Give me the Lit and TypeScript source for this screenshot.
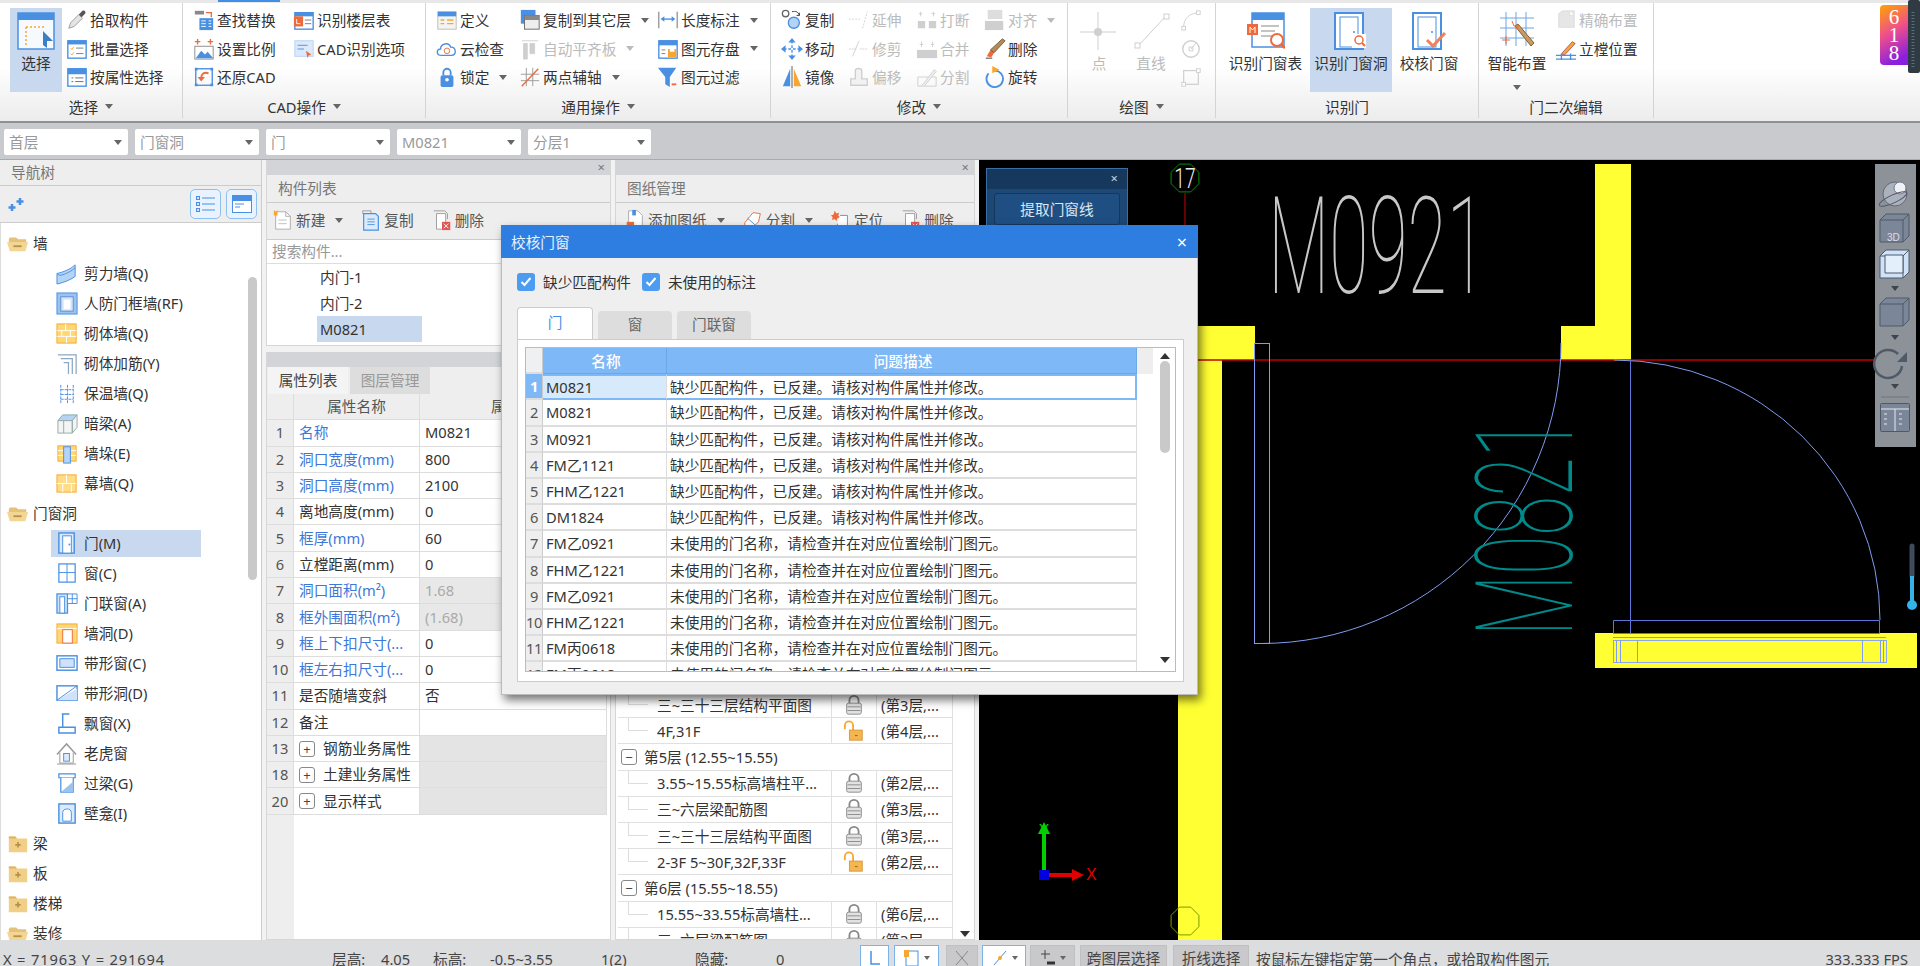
import { LitElement, html, css, svg } from "lit";
import { customElement } from "lit/decorators.js";

const B = "#4a90e2", LB = "#b5d3f5", O = "#f7a72f", R = "#ee6a3a", G = "#cfcfcf", D = "#666";
const I: Record<string, any> = {
  pick: svg`<path d="M3 21l2-6 9-9 4 4-9 9z" fill="#e4e4e4" stroke="#999"/><path d="M14 6l4-4c2-1 4 1 3 3l-4 4z" fill="#555"/>`,
  batch: svg`<rect x="2" y="3" width="20" height="19" fill="#fff" stroke="${B}" stroke-width="1.5"/><rect x="2" y="3" width="20" height="4" fill="${B}"/><path d="M5 11l1.500 1.500 2-3M5 17l1.500 1.500 2-3" stroke="${O}" fill="none"/><path d="M11 11h8M11 17h8" stroke="#777"/>`,
  attr: svg`<rect x="2" y="3" width="20" height="19" fill="#fff" stroke="${B}" stroke-width="1.500"/><rect x="2" y="3" width="20" height="6" fill="${B}"/><path d="M6 13h2M6 17h2M10 13h9M10 17h9" stroke="#666"/>`,
  find: svg`<rect x="2" y="2" width="10" height="4" fill="#888"/><path d="M14 4h6v5" stroke="${R}" fill="none" stroke-width="1.500"/><rect x="7" y="10" width="15" height="13" fill="${B}"/><path d="M9 13h5M9 16h5M9 19h5M17 13h3M17 16h3M17 19h3" stroke="#fff"/>`,
  floor: svg`<rect x="2" y="4" width="20" height="18" fill="#fff" stroke="${B}" stroke-width="1.500"/><rect x="2" y="4" width="20" height="4" fill="${B}"/><rect x="1" y="8" width="10" height="11" fill="${R}"/><path d="M4 11v5h4" stroke="#fff" fill="none"/><path d="M13 12h7M13 16h7" stroke="#777"/>`,
  scale: svg`<path d="M5 1v6M2 4h6M19 1v6M16 4h6" stroke="${R}" stroke-width="1.500"/><rect x="2" y="9" width="20" height="14" fill="#fff" stroke="#888"/><path d="M3 22l6-8 4 4 3-3 6 7z" fill="${B}"/>`,
  cadopt: svg`<rect x="2" y="3" width="20" height="17" fill="#dbe9fa" stroke="${LB}"/><path d="M14 14l6 4-3 1-1 3z" fill="${R}"/><path d="M5 8h11M5 12h7" stroke="${B}"/>`,
  restore: svg`<rect x="3" y="3" width="18" height="18" fill="none" stroke="${B}" stroke-width="1.500"/><path d="M2 2h3v3H2zM19 2h3v3h-3zM2 19h3v3H2zM19 19h3v3h-3z" fill="${B}"/><path d="M17 8c-5-2-8 1-8 5" stroke="${R}" fill="none" stroke-width="2"/><path d="M5 12h8l-4 5z" fill="${R}"/>`,
  def: svg`<rect x="2" y="3" width="20" height="19" fill="#f4f4f4" stroke="#bbb"/><rect x="2" y="3" width="20" height="5" fill="${B}"/><path d="M5 12h4M5 16h4M12 12h7M12 16h7" stroke="${O}" stroke-width="1.500"/>`,
  cloud: svg`<path d="M6 19c-6 0-6-7-1-7 0-6 9-8 11-2 6-1 7 9 1 9z" fill="#fff" stroke="${B}" stroke-width="1.500"/><circle cx="12" cy="14" r="3" fill="none" stroke="${R}"/>`,
  copyf: svg`<rect x="2" y="1" width="16" height="15" fill="${B}"/><rect x="6" y="7" width="16" height="15" fill="#eee" stroke="#666"/><rect x="6" y="7" width="16" height="5" fill="#888"/>`,
  align: svg`<path d="M3 3h18M5 6v17h4V6zM12 6v11h5V6z" fill="${G}" stroke="${G}"/>`,
  lock: svg`<rect x="5" y="10" width="14" height="13" rx="2" fill="${B}"/><path d="M8 10V7a4 4 0 018 0v3" stroke="${B}" stroke-width="2" fill="none"/><circle cx="12" cy="15" r="2" fill="#fff"/>`,
  two: svg`<path d="M8 2v20M15 2v20M2 9h20M2 16h20" stroke="#999"/><path d="M3 22L21 3" stroke="${R}" stroke-width="1.500"/>`,
  len: svg`<path d="M2 3v18M22 3v18" stroke="#666"/><path d="M5 11h13" stroke="${B}" stroke-width="1.500"/><path d="M4 11l4-3v6zM20 11l-4-3v6z" fill="${B}"/>`,
  save: svg`<rect x="2" y="3" width="20" height="19" fill="#fff" stroke="${B}" stroke-width="1.500"/><rect x="2" y="3" width="20" height="5" fill="${B}"/><rect x="12" y="12" width="9" height="9" fill="${O}"/><rect x="14" y="12" width="5" height="3" fill="#fff"/><path d="M5 13h4M5 17h4" stroke="#777"/>`,
  filter: svg`<path d="M1 2h20l-7 10v11l-5-3v-8z" fill="${B}"/><path d="M16 20h5" stroke="${R}" stroke-width="2"/>`,
  copy: svg`<circle cx="5" cy="5" r="3.500" fill="none" stroke="#666" stroke-width="1.500"/><circle cx="14" cy="15" r="6" fill="${LB}" stroke="${B}" stroke-width="1.500"/><path d="M12 3c4-1 7 0 8 4M20 4v3h-3" fill="none" stroke="#333"/>`,
  extend: svg`<path d="M1 11h12M16 21L21 3" stroke="${G}" stroke-dasharray="2 1.500"/>`,
  brk: svg`<path d="M2 13h8v8H2zM14 13h8v8h-8z" fill="${G}"/><path d="M5 8V3M19 8V3M3 5h4M17 5h4" stroke="${G}"/>`,
  al2: svg`<rect x="4" y="1" width="16" height="10" fill="#ddd"/><rect x="1" y="13" width="20" height="10" fill="${G}"/>`,
  move: svg`<path d="M12 3v18M3 12h18" stroke="${B}" stroke-width="1.500" stroke-dasharray="3 2"/><path d="M12 0l4 5H8zM12 24l4-5H8zM0 12l5-4v8zM24 12l-5-4v8z" fill="${B}"/>`,
  trim: svg`<path d="M1 12h8M13 12h9" stroke="${G}" stroke-dasharray="2 1"/><path d="M5 20L12 3" stroke="${G}"/>`,
  merge: svg`<rect x="1" y="13" width="22" height="9" fill="${G}"/><path d="M6 4v6M18 4v6M4 7h4M16 7h4" stroke="${G}"/>`,
  del: svg`<path d="M2 22h7" stroke="#333"/><path d="M3 20l4-7 4 3-3 5z" fill="${R}"/><path d="M7 13L20 1l3 2-12 13z" fill="#b58a5a" stroke="#7a5a33"/>`,
  mirror: svg`<path d="M10 3L2 22h8z" fill="${B}"/><path d="M14 3l8 19h-8z" fill="${O}"/><path d="M12 0v24" stroke="#555"/>`,
  offset: svg`<path d="M3 21v-7h5V5c0-3 7-3 7 0v9h6v7z" fill="#f2f2f2" stroke="${G}" stroke-width="1.500"/>`,
  split: svg`<path d="M2 22V12h20v10z" fill="none" stroke="${G}"/><path d="M6 22L20 4l2 2L9 22" fill="#eee" stroke="${G}"/>`,
  rot: svg`<path d="M12 5a9 9 0 11-7 3" fill="none" stroke="${B}" stroke-width="2"/><path d="M9 0l8 4-8 4z" fill="${O}"/>`,
  point: svg`<path d="M18 0v40M0 20h36" stroke="${G}"/><circle cx="18" cy="20" r="4" fill="${G}"/>`,
  line: svg`<path d="M6 34L34 4" stroke="${G}"/><rect x="3" y="31" width="5" height="5" fill="#fff" stroke="${G}"/><rect x="32" y="2" width="5" height="5" fill="#fff" stroke="${G}"/>`,
  arc: svg`<path d="M4 20C4 10 10 5 20 4" fill="none" stroke="${G}"/><rect x="2" y="19" width="4" height="4" fill="#fff" stroke="${G}"/><rect x="18" y="2" width="4" height="4" fill="#fff" stroke="${G}"/>`,
  circ: svg`<circle cx="12" cy="12" r="9" fill="none" stroke="${G}" stroke-width="1.500"/><rect x="10" y="10" width="4" height="4" fill="#fff" stroke="${G}"/><path d="M12 12l6-7" stroke="${G}"/>`,
  rct: svg`<rect x="4" y="5" width="16" height="15" fill="none" stroke="${G}" stroke-width="1.300"/><rect x="2" y="18" width="4" height="4" fill="#fff" stroke="${G}"/><rect x="18" y="3" width="4" height="4" fill="#fff" stroke="${G}"/>`,
  sel: svg`<rect x="1" y="1" width="36" height="36" fill="#f6fafe" stroke="${B}" stroke-width="1.500"/><rect x="1" y="1" width="36" height="7" fill="${B}"/><path d="M9 15h20M9 15v19" stroke="${O}" stroke-dasharray="2 2" stroke-width="1.500" fill="none"/><path d="M26 19l10 10-6 0 0 7-4-3z" fill="#3a7fc8"/>`,
  tbl: svg`<rect x="5" y="1" width="32" height="34" fill="#fff" stroke="${B}" stroke-width="1.500"/><rect x="5" y="1" width="32" height="7" fill="${B}"/><rect x="0" y="12" width="11" height="11" fill="${R}"/><path d="M3 21v-6l2.500 3 2.500-3v6" stroke="#fff" fill="none"/><path d="M14 14h18M14 19h14M14 24h12" stroke="#888"/><circle cx="30" cy="28" r="6" fill="#fff" stroke="${R}" stroke-width="2"/><path d="M34 32l4 4" stroke="${R}" stroke-width="3"/>`,
  rec: svg`<rect x="3" y="1" width="28" height="36" fill="#fff" stroke="${B}" stroke-width="2"/><rect x="8" y="5" width="18" height="30" fill="none" stroke="${B}"/><circle cx="22" cy="20" r="1" fill="${B}"/><rect x="20" y="22" width="14" height="14" fill="#fff"/><circle cx="27" cy="28" r="4" fill="none" stroke="${R}" stroke-width="1.500"/><path d="M30 31l3 3" stroke="${R}" stroke-width="2"/>`,
  chk: svg`<rect x="3" y="1" width="28" height="36" fill="#fff" stroke="${B}" stroke-width="2"/><rect x="8" y="5" width="18" height="30" fill="none" stroke="${B}"/><circle cx="22" cy="20" r="1" fill="${B}"/><path d="M17 28l6 6 12-13" stroke="#f2815a" stroke-width="3" fill="none"/>`,
  smart: svg`<path d="M2 6h34M2 16h34M2 26h34M8 0v34M18 0v34M28 0v34" stroke="#6aa5e8"/><path d="M17 14l16 20 3-3-16-19z" fill="#c99b63" stroke="#806030"/><path d="M14 9l2 5 5-1-3 4" stroke="${R}" fill="none"/><path d="M8 24v8M4 28h8" stroke="${R}"/>`,
  prec: svg`<path d="M4 5l4-3h13v18H4z" fill="#e6e6e6" stroke="#ddd"/><path d="M16 2v5h5" fill="#fff" stroke="#ddd"/>`,
  mull: svg`<path d="M8 16l11-12 3 2-11 12-4 1z" fill="${O}" stroke="#a56"/><path d="M1 19h22M1 23h22M7 17v7M17 17v7" stroke="${B}" stroke-width="1.500"/>`,
  open: svg`<path d="M2 8l1-2h7l2 2h9v4H2z" fill="#e4c27a"/><path d="M0 11h23l-3 10H3z" fill="#f3d693"/><path d="M7 15.500h9" stroke="#b69248" stroke-width="2"/>`,
  closed: svg`<path d="M2 5h7l2 2h11v15H2z" fill="#f1cf88"/><path d="M2 5h7l2 2H2z" fill="#dcb368"/><path d="M12 11v6M9 14h6" stroke="#b69248" stroke-width="1.800"/>`,
  shear: svg`<path d="M1 12c5-1 14-4 19-9v12c-5 4-14 7-19 8z" fill="${LB}" stroke="${B}"/><path d="M1 12l3 2c6-1 13-5 16-8" fill="none" stroke="${B}"/>`,
  rf: svg`<rect x="1" y="1" width="21" height="22" fill="#9cc2ef" stroke="${B}"/><rect x="5" y="5" width="13" height="15" fill="#d5e5f8" stroke="#5b8fd0"/><rect x="8" y="8" width="7" height="10" fill="#fff"/>`,
  brick: svg`<rect x="1" y="2" width="20" height="20" fill="#ffd874" stroke="${O}"/><path d="M1 9h20M1 15h20M10 2v7M6 9v6M15 9v6M11 15v7" stroke="#fff"/>`,
  bars: svg`<path d="M2 3h19v20M5 7h12v16M8 11h5v12" stroke="#8ea7c5" fill="none" stroke-width="1.300"/>`,
  ins: svg`<path d="M5 3v20M12 3v20M18 3v20M5 8h13M5 13h13M5 18h13" stroke="${B}" stroke-dasharray="3 1"/>`,
  beam: svg`<path d="M2 9l5-6h15l-5 6z" fill="${LB}" stroke="#8aa"/><path d="M2 9h15v13H2zM17 9l5-6v13l-5 6zM8 9v13" fill="#f4f4f4" stroke="#9aa"/>`,
  pier: svg`<rect x="2" y="4" width="19" height="16" fill="#ffd874" stroke="${O}"/><path d="M2 9h19M2 14h19" stroke="#fff"/><rect x="8" y="5" width="7" height="17" fill="${LB}" stroke="${B}"/>`,
  curt: svg`<rect x="1" y="3" width="20" height="18" fill="#ffdc86" stroke="${O}"/><path d="M1 12h20M11 3v9M7 12v9M16 12v9" stroke="#fff"/>`,
  door: svg`<rect x="3" y="1" width="16" height="21" fill="#dcebfc" stroke="${B}" stroke-width="1.500"/><rect x="7" y="4" width="9" height="18" fill="#fff" stroke="${B}"/><circle cx="14" cy="13" r="1" fill="${B}"/>`,
  win: svg`<rect x="3" y="2" width="17" height="19" fill="#fff" stroke="${B}" stroke-width="1.300"/><path d="M11.500 2v19M3 11h17" stroke="${B}"/>`,
  dwin: svg`<rect x="1" y="2" width="11" height="20" fill="#cfe2f9" stroke="${B}" stroke-width="1.300"/><rect x="4" y="5" width="5" height="17" fill="#fff" stroke="${B}"/><path d="M12 2h10v10H12zM17 2v10M12 7h10" fill="#fff" stroke="${B}"/>`,
  hole: svg`<rect x="1" y="2" width="21" height="20" fill="#ffd874" stroke="${O}"/><path d="M1 7h21" stroke="#fff"/><rect x="7" y="8" width="10" height="14" fill="#fff" stroke="${R}"/>`,
  swin: svg`<rect x="1" y="4" width="21" height="15" fill="#fff" stroke="${B}" stroke-width="1.500"/><rect x="4" y="7" width="15" height="9" fill="#cfe2f9" stroke="${B}"/>`,
  shole: svg`<rect x="1" y="4" width="21" height="15" fill="#fff" stroke="${B}" stroke-width="1.500"/><path d="M1 19L22 7v12z" fill="#cfe2f9"/><path d="M1 19L22 4" stroke="${B}"/>`,
  bay: svg`<path d="M6 2h8M7 2v14M3 16h17v6H3z" fill="none" stroke="${B}" stroke-width="1.500"/>`,
  dorm: svg`<path d="M1 13L11 2l10 11" fill="none" stroke="#999" stroke-width="1.500"/><path d="M4 11v11h14V11" fill="none" stroke="#999"/><rect x="8" y="12" width="6" height="8" fill="#dcebfc" stroke="${B}"/><path d="M1 23h20" stroke="#999"/>`,
  lint: svg`<path d="M3 2h17v4H3z" fill="#fff" stroke="${B}" stroke-width="1.300"/><path d="M5 6v15h13V6" fill="#fff" stroke="${B}" stroke-width="1.300"/><path d="M5 21l13-11v11z" fill="#9cc2ef"/>`,
  niche: svg`<rect x="3" y="2" width="17" height="20" fill="#dcebfc" stroke="${B}" stroke-width="1.500"/><path d="M7 20v-9c0-5 9-5 9 0v9z" fill="#fff" stroke="${B}"/>`,
  nw: svg`<path d="M4 3h11l5 5v14H4z" fill="#fff" stroke="#aaa"/><path d="M15 3v5h5" fill="none" stroke="#aaa"/><path d="M2 1l2 2 2-2v6H2z" fill="${O}"/><path d="M7 12h9M7 16h9" stroke="#bbb"/>`,
  cp: svg`<path d="M3 2h9v3H3z" fill="none" stroke="#999"/><path d="M4 5h13l3 3v15H4z" fill="#dcebfc" stroke="${B}" stroke-width="1.300"/><path d="M8 11h8M8 14h8M8 17h8" stroke="${B}"/>`,
  dl: svg`<path d="M3 2h12l3 3v6" fill="none" stroke="#999"/><path d="M6 5h10v17H6z" fill="#fff" stroke="#999"/><rect x="12" y="14" width="9" height="9" fill="#e25555"/><path d="M14 16l5 5M19 16l-5 5" stroke="#fff"/>`,
  add: svg`<path d="M5 2h10l5 5v15H5z" fill="#fff" stroke="#aaa"/><rect x="3" y="14" width="8" height="8" fill="${R}"/><rect x="9" y="1" width="4" height="6" fill="${B}"/>`,
  spl: svg`<path d="M3 15l9-11 8 1-2 9-7 7-8-3z" fill="#fff" stroke="${R}"/><path d="M6 10l9 8" stroke="${B}"/>`,
  loc: svg`<path d="M5 2l2 3 3-1-1 3 2 2-3 1-1 3-2-2-3 1 1-3-2-2 3-1z" fill="${R}"/><path d="M11 7h8v15H8v-6" fill="#fff" stroke="${B}"/>`,
  lk: svg`<rect x="4" y="10" width="16" height="12" rx="2" fill="#e2e2e2" stroke="#888"/><path d="M7 10V7a5 5 0 0110 0v3" stroke="#888" stroke-width="2" fill="none"/><path d="M5 14h14M5 18h14" stroke="#888"/>`,
  ul: svg`<path d="M2 10V6a4.500 4.500 0 019 0v5" stroke="${O}" stroke-width="2" fill="none"/><rect x="7" y="11" width="14" height="11" fill="#f4b650" stroke="#d8973a"/><path d="M13 17h3" stroke="#8a6020"/>`,
};
const icon = (n: string, s = 22, vb = 24) =>
  html`<svg class="ic" width=${s} height=${s} viewBox="0 0 ${vb} ${vb}">${I[n]}</svg>`;

type It = { t: string; i: string; off?: boolean; c?: boolean };
type Col = { w: number; items?: It[]; big?: { t: string; i: string; on?: boolean; off?: boolean; c?: boolean } };
const GROUPS: { w: number; pad: number; label: string; caret?: boolean; cols: Col[] }[] = [
  { w: 183, pad: 10, label: "选择", caret: true, cols: [
    { w: 56, big: { t: "选择", i: "sel", on: true } },
    { w: 110, items: [{ t: "拾取构件", i: "pick" }, { t: "批量选择", i: "batch" }, { t: "按属性选择", i: "attr" }] },
  ] },
  { w: 243, pad: 10, label: "CAD操作", caret: true, cols: [
    { w: 100, items: [{ t: "查找替换", i: "find" }, { t: "设置比例", i: "scale" }, { t: "还原CAD", i: "restore" }] },
    { w: 130, items: [{ t: "识别楼层表", i: "floor" }, { t: "CAD识别选项", i: "cadopt" }] },
  ] },
  { w: 345, pad: 10, label: "通用操作", caret: true, cols: [
    { w: 83, items: [{ t: "定义", i: "def" }, { t: "云检查", i: "cloud" }, { t: "锁定", i: "lock", c: true }] },
    { w: 138, items: [{ t: "复制到其它层", i: "copyf", c: true }, { t: "自动平齐板", i: "align", off: true, c: true }, { t: "两点辅轴", i: "two", c: true }] },
    { w: 110, items: [{ t: "长度标注", i: "len", c: true }, { t: "图元存盘", i: "save", c: true }, { t: "图元过滤", i: "filter" }] },
  ] },
  { w: 297, pad: 10, label: "修改", caret: true, cols: [
    { w: 67, items: [{ t: "复制", i: "copy" }, { t: "移动", i: "move" }, { t: "镜像", i: "mirror" }] },
    { w: 68, items: [{ t: "延伸", i: "extend", off: true }, { t: "修剪", i: "trim", off: true }, { t: "偏移", i: "offset", off: true }] },
    { w: 68, items: [{ t: "打断", i: "brk", off: true }, { t: "合并", i: "merge", off: true }, { t: "分割", i: "split", off: true }] },
    { w: 80, items: [{ t: "对齐", i: "al2", off: true, c: true }, { t: "删除", i: "del" }, { t: "旋转", i: "rot" }] },
  ] },
  { w: 148, pad: 8, label: "绘图", caret: true, cols: [
    { w: 50, big: { t: "点", i: "point", off: true } },
    { w: 54, big: { t: "直线", i: "line", off: true } },
    { w: 30, items: [{ t: "", i: "arc", off: true }, { t: "", i: "circ", off: true }, { t: "", i: "rct", off: true }] },
  ] },
  { w: 263, pad: 9, label: "识别门", cols: [
    { w: 85, big: { t: "识别门窗表", i: "tbl" } },
    { w: 86, big: { t: "识别门窗洞", i: "rec", on: true } },
    { w: 70, big: { t: "校核门窗", i: "chk" } },
  ] },
  { w: 175, pad: 4, label: "门二次编辑", cols: [
    { w: 72, big: { t: "智能布置", i: "smart", c: true } },
    { w: 90, items: [{ t: "精确布置", i: "prec", off: true }, { t: "立樘位置", i: "mull" }] },
  ] },
];
const NAV: [string, string, boolean][] = [
  ["墙", "open", true], ["剪力墙(Q)", "shear", false], ["人防门框墙(RF)", "rf", false], ["砌体墙(Q)", "brick", false],
  ["砌体加筋(Y)", "bars", false], ["保温墙(Q)", "ins", false], ["暗梁(A)", "beam", false], ["墙垛(E)", "pier", false], ["幕墙(Q)", "curt", false],
  ["门窗洞", "open", true], ["门(M)", "door", false], ["窗(C)", "win", false], ["门联窗(A)", "dwin", false], ["墙洞(D)", "hole", false],
  ["带形窗(C)", "swin", false], ["带形洞(D)", "shole", false], ["飘窗(X)", "bay", false], ["老虎窗", "dorm", false], ["过梁(G)", "lint", false], ["壁龛(I)", "niche", false],
  ["梁", "closed", true], ["板", "closed", true], ["楼梯", "closed", true], ["装修", "open", true],
];
const PROPS: [string, string, string, string][] = [
  ["1", "名称", "M0821", "b"], ["2", "洞口宽度(mm)", "800", "b"], ["3", "洞口高度(mm)", "2100", "b"], ["4", "离地高度(mm)", "0", ""],
  ["5", "框厚(mm)", "60", "b"], ["6", "立樘距离(mm)", "0", ""], ["7", "洞口面积(m²)", "1.68", "bg"], ["8", "框外围面积(m²)", "(1.68)", "bg"],
  ["9", "框上下扣尺寸(...", "0", "b"], ["10", "框左右扣尺寸(...", "0", "b"], ["11", "是否随墙变斜", "否", ""], ["12", "备注", "", ""],
  ["13", "钢筋业务属性", "", "x"], ["18", "土建业务属性", "", "x"], ["20", "显示样式", "", "x"],
];
const M1 = "缺少匹配构件，已反建。请核对构件属性并修改。", M2 = "未使用的门名称，请检查并在对应位置绘制门图元。";
const CHECK: [string, string][] = [
  ["M0821", M1], ["M0821", M1], ["M0921", M1], ["FM乙1121", M1], ["FHM乙1221", M1], ["DM1824", M1],
  ["FM乙0921", M2], ["FHM乙1221", M2], ["FM乙0921", M2], ["FHM乙1221", M2], ["FM丙0618", M2], ["FM丙0618", M2],
];
const DRAW: [string, string, string, number][] = [
  ["三~三十三层结构平面图", "lk", "(第3层,...", 1], ["4F,31F", "ul", "(第4层,...", 2], ["第5层 (12.55~15.55)", "", "", 0],
  ["3.55~15.55标高墙柱平...", "lk", "(第2层,...", 1], ["三~六层梁配筋图", "lk", "(第3层,...", 1], ["三~三十三层结构平面图", "lk", "(第3层,...", 1], ["2-3F 5~30F,32F,33F", "ul", "(第2层,...", 2],
  ["第6层 (15.55~18.55)", "", "", 0], ["15.55~33.55标高墙柱...", "lk", "(第6层,...", 1], ["三~六层梁配筋图", "lk", "(第3层,...", 1],
];
const STATUS: [number, string][] = [[329, "X = 71963 Y = 291694"], [49, "层高:"], [52, "4.05"], [57, "标高:"], [111, "-0.5~3.55"], [94, "1(2)"], [81, "隐藏:"], [84, "0"]];

@customElement("app-root")
export class AppRoot extends LitElement {
  static styles = css`
    :host { display: block; width: 1920px; height: 966px; position: relative; overflow: hidden; background: #f2f2f2;
      font: 14.67px/20px "Noto Sans", "Noto Sans CJK SC", sans-serif; color: #333; }
    .ic { flex: none; display: block; }
    .ribbon { height: 123px; box-sizing: border-box; padding-top: 3px; display: flex; position: relative;
      background: linear-gradient(#fff 55%, #ececec); border-top: 0; border-bottom: 2px solid #8f9194; box-shadow: inset 0 3px 0 #e8e8e8; }
    .tabmark { position: absolute; left: 218px; top: 0; width: 62px; height: 2px; background: #3f8fe8; }
    .group { box-sizing: border-box; border-right: 1px solid #d4d4d4; margin-bottom: 3px; display: flex; flex-direction: column; flex: none; }
    .gbody { height: 93px; display: flex; }
    .glabel { height: 23px; display: flex; align-items: center; justify-content: center; gap: 7px; }
    .caret { display: inline-block; flex: none; width: 0; height: 0; border: 4px solid transparent; border-top: 5px solid #666; border-bottom: 0; }
    .col { padding-top: 3px; flex: none; box-sizing: border-box; }
    .it { height: 28.5px; display: flex; align-items: center; gap: 2px; white-space: nowrap; }
    .it .caret { margin-left: 8px; }
    .off { color: #bbb; }
    .off .caret { border-top-color: #bbb; }
    .big { height: 84px; margin-top: 5px; display: flex; flex-direction: column; align-items: center; padding-top: 4px; box-sizing: border-box; white-space: nowrap; }
    .big .lab { margin-top: 3px; line-height: 20px; }
    .big .caret { margin-top: 12px; }
    .big.on { background: #c7d8ef; }
    .bar { height: 37px; box-sizing: border-box; background: #c8cacd; border-bottom: 1px solid #aaa; display: flex; gap: 7px; padding: 6px 4px 4px; }
    .sel { width: 124px; height: 26px; box-sizing: border-box; background: #fff; border-radius: 2px; color: #999; display: flex; align-items: center; justify-content: space-between; padding: 0 6px 0 5px; }
    .main { height: 780px; display: flex; background: #f2f2f2; }
    .nav { width: 261px; flex: none; border-right: 1px solid #ccc; display: flex; flex-direction: column; position: relative; }
    .nt { height: 26px; background: #eee; color: #777; padding-left: 11px; line-height: 24px; border-bottom: 1px solid #ccc; box-sizing: border-box; }
    .nb { height: 37px; background: #eee; border-bottom: 1px solid #ccc; box-sizing: border-box; display: flex; align-items: center; gap: 5px; padding: 0 4px 0 8px; }
    .nb .spark { margin-right: auto; }
    .nbtn { width: 31px; height: 30px; box-sizing: border-box; border: 1px solid #8cc0f0; border-radius: 5px; background: #e8f3ff; display: flex; align-items: center; justify-content: center; }
    .tree { flex: 1; min-height: 0; background: #fff; padding-top: 5px; overflow: hidden; border-left: 1px solid #ddd; }
    .tr { height: 30px; display: flex; align-items: center; white-space: nowrap; }
    .tr.root { padding-left: 6px; gap: 4px; }
    .tr .child { margin-left: 50px; width: 150px; height: 27px; display: flex; align-items: center; gap: 5px; padding-left: 5px; box-sizing: border-box; }
    .tr .child.on { background: #c7d8ef; }
    .thumb { position: absolute; background: #c9c9c9; border-radius: 5px; }
    .nav .thumb { left: 248px; top: 117px; width: 9px; height: 303px; }
    .midA { width: 345px; flex: none; margin-left: 4px; display: flex; flex-direction: column; gap: 6px; }
    .midB { width: 360px; flex: none; margin: 0 4px 0 4px; display: flex; flex-direction: column; }
    .panel { background: #fff; border: 1px solid #d6d6d6; border-width: 0 1px 1px 1px; display: flex; flex-direction: column; overflow: hidden; }
    .strip { height: 15px; flex: none; background: #d3d4d7; display: flex; justify-content: flex-end; align-items: center; padding-right: 5px; color: #777; font-size: 13px; line-height: 15px; }
    .ptitle { height: 28px; flex: none; background: #eee; color: #777; padding-left: 11px; line-height: 27px; border-bottom: 1px solid #ccc; box-sizing: border-box; }
    .ptool { height: 37px; flex: none; background: #eee; border-bottom: 1px solid #ccc; box-sizing: border-box; display: flex; align-items: center; padding: 0 0 2px 5px; color: #555; white-space: nowrap; }
    .ptool.wide { padding-left: 8px; }
    .pi { display: flex; align-items: center; gap: 2px; margin-right: 17px; }
    .pi .caret { margin-left: 8px; }
    .search { height: 23px; flex: none; color: #999; padding-left: 5px; line-height: 22px; border-bottom: 1px solid #ddd; }
    .li { height: 26px; padding-left: 53px; line-height: 26px; width: 105px; box-sizing: content-box; }
    .list { height: 82px; }
    .li.on { margin-left: 50px; padding-left: 3px; width: 102px; background: #c7d8ef; }
    .tabs { height: 27px; flex: none; display: flex; gap: 2px; background: #eee; padding-left: 1px; }
    .tabs div { width: 80px; text-align: center; line-height: 27px; background: #ddd; color: #999; }
    .tabs div.on { background: #f4f4f4; color: #444; }
    .grid { display: grid; grid-template-columns: 27px 126px 187px; background: #fff; }
    .grid > div { height: 26.3px; box-sizing: border-box; border-right: 1px solid #ddd; border-bottom: 1px solid #ddd; line-height: 25px; padding-left: 5px; white-space: nowrap; overflow: hidden; display: flex; align-items: center; gap: 6px; }
    .grid .n { background: #eee; padding: 0; justify-content: center; color: #555; }
    .grid .h { background: #eee; justify-content: center; color: #555; padding: 0; }
    .grid .blue { color: #3d78d8; }
    .grid .gray { background: #e8e8e8; color: #aaa; }
    .grid .sec { background: #e4e4e4; }
    .plus { width: 16px; height: 16px; box-sizing: border-box; border: 1px solid #888; border-radius: 3px; background: #fff; flex: none; margin-right: 2px; color: #444; font-size: 13px; line-height: 14px; text-align: center; display: block; font-style: normal; }
    .grest { width: 27px; flex: 1; background: #eee; }
    .pb { flex: 1; min-height: 0; overflow: hidden; background: #fff; position: relative; }
    .sp { height: 452px; }
    .dr { height: 26.2px; box-sizing: border-box; width: 335px; margin-left: 2px; display: grid; grid-template-columns: 214px 45px 76px; border-bottom: 1px solid #e0e0e0; }
    .dr > div { border-right: 1px solid #e0e0e0; display: flex; align-items: center; white-space: nowrap; overflow: hidden; }
    .dr .nm { padding-left: 39px; position: relative; }
    .dr .nm::before { content: ""; position: absolute; left: 10px; top: -6px; height: 19px; width: 20px; box-sizing: border-box; border: solid #ddd; border-width: 0 0 1px 1px; }
    .dr .ico { justify-content: center; }
    .dr .ex { padding-left: 4px; }
    .dr.grp { display: flex; align-items: center; gap: 5px; padding-left: 3px; border-right: 1px solid #e0e0e0; }
    .arrow { position: absolute; width: 0; height: 0; border: 5px solid transparent; border-top: 6px solid #333; border-bottom: 0; }
    .canvas { flex: 1; min-width: 0; background: #000; position: relative; overflow: hidden; }
    .canvas > svg { position: absolute; left: 0; top: 0; display: block; }
    .tk { position: absolute; left: 7px; top: 8px; width: 142px; height: 80px; box-sizing: border-box; background: #1d4775; border: 1px solid #3a6ea5; }
    .tkh { height: 20px; background: #17385d; color: #b8d4f2; text-align: right; padding-right: 9px; line-height: 18px; font-size: 13px; }
    .tkb { margin: 4px 7px; height: 32px; box-sizing: border-box; border: 1px solid #16365a; border-radius: 3px; background: #1f4f82; color: #dbe7f5; text-align: center; line-height: 30px; }
    .status { height: 26px; background: #dcdddf; display: flex; align-items: flex-start; position: relative; white-space: nowrap; color: #444; overflow: hidden; padding-left: 3px; }
    .st { padding-top: 9px; flex: none; box-sizing: border-box; line-height: 20px; }
    .st.wide { letter-spacing: .85px; }
    .sb { height: 26px; margin-top: 5px; box-sizing: border-box; flex: none; display: flex; align-items: center; justify-content: center; gap: 3px; }
    .sb.a { background: #fff; border: 1px solid #7ab3ee; }
    .sb.g { background: #c9c9cb; border: 1px solid #c0c0c0; }
    .sb .caret { border-width: 3px; border-top-width: 4px; }
    .sb.t { padding-bottom: 4px; align-items: flex-start; padding-top: 2px; }
    .fps { margin-left: auto; margin-right: 12px; }
    .dlg { position: absolute; left: 501px; top: 225px; width: 697px; height: 470px; background: #efefef; border: 1px solid #bbb; border-top: 0; box-sizing: border-box; box-shadow: 3px 5px 9px rgba(0,0,0,.55); display: flex; flex-direction: column; }
    .dh { height: 33px; flex: none; margin: 0 -1px; background: #2e7de0; color: #e8f2ff; display: flex; justify-content: space-between; align-items: center; padding: 0 11px 0 10px; }
    .dx { color: #fff; font-size: 18px; }
    .opts { height: 47px; flex: none; display: flex; align-items: center; padding: 0 0 2px 15px; }
    .cb { width: 18px; height: 18px; border-radius: 3px; background: #4c9cf2; display: flex; align-items: center; justify-content: center; flex: none; margin-right: 8px; }
    .opts span { margin-right: 11px; }
    .dtabs { display: flex; height: 32px; flex: none; padding-left: 15px; align-items: flex-end; gap: 5px; }
    .dtabs div { width: 74px; height: 28px; background: #ddd; border-radius: 4px 4px 0 0; text-align: center; line-height: 26px; color: #666; }
    .dtabs div.on { width: 76px; height: 32px; background: #fff; color: #3f8fe8; border: 1px solid #ccc; border-bottom: 0; box-sizing: border-box; line-height: 28px; }
    .dbody { width: 667px; height: 343px; margin-left: 15px; box-sizing: border-box; background: #fff; border: 1px solid #ccc; padding: 7px; }
    .dt { position: relative; height: 325px; border: 1px solid #bbb; overflow: hidden; box-sizing: border-box; background: #fff; }
    .dg { display: grid; grid-template-columns: 17px 124px 470px; width: 611px; }
    .dg > div { height: 26.2px; box-sizing: border-box; border-right: 1px solid #ddd; border-bottom: 2px solid #ddd; display: flex; align-items: center; padding-left: 3px; white-space: nowrap; }
    .dg .n { padding: 0; justify-content: center; background: #eee; color: #555; letter-spacing: -.5px; border-right: 1px solid #ccc; }
    .dg .hd { background: #7fb8f7; color: #fff; justify-content: center; border-color: #6aa8ec; font-weight: 500; border-bottom-width: 1px; }
    .dg .hn { background: #eef0f2; }
    .dg .s1 { background: #7fb8f7; color: #fff; font-weight: 700; }
    .dg .s2 { background: #d6eafc; border-top: 2px solid #7fb8f7; border-bottom: 2px solid #7fb8f7; }
    .dg .s3 { border-top: 2px solid #7fb8f7; border-bottom: 2px solid #7fb8f7; border-right: 2px solid #7fb8f7; }
    .dhdr { position: absolute; left: 611px; top: 0; right: 22px; height: 26px; background: #eee; }
    .dt .thumb { left: 634px; top: 13px; width: 10px; height: 92px; }
    .up { position: absolute; left: 634px; top: 5px; width: 0; height: 0; border: 5px solid transparent; border-bottom: 6px solid #333; border-top: 0; }
  `;

  ribbon() {
    return html`<div class="ribbon"><div class="tabmark"></div>
      ${GROUPS.map((g) => html`<div class="group" style="width:${g.w}px">
        <div class="gbody" style="padding-left:${g.pad}px">
          ${g.cols.map((c) => c.big
            ? html`<div class="big ${c.big.on ? "on" : ""} ${c.big.off ? "off" : ""}" style="width:${c.w - 4}px;margin-right:4px">
                ${icon(c.big.i, 38, 38)}
                <span class="lab">${c.big.t}</span>${c.big.c ? html`<i class="caret"></i>` : ""}</div>`
            : html`<div class="col" style="width:${c.w}px">${c.items!.map((i) => html`<div class="it ${i.off ? "off" : ""}">${icon(i.i)}${i.t ? html`<span>${i.t}</span>` : ""}${i.c ? html`<i class="caret"></i>` : ""}</div>`)}</div>`)}
        </div>
        <div class="glabel">${g.label}${g.caret ? html`<i class="caret"></i>` : ""}</div>
      </div>`)}
      <svg class="badge" width="40" height="76" viewBox="0 0 40 76" style="position:absolute;left:1880px;top:0">
        <defs><linearGradient id="g618" x1="0" y1="0" x2="0.300" y2="1"><stop offset="0" stop-color="#ffa400"/><stop offset=".5" stop-color="#f0508a"/><stop offset="1" stop-color="#8a1fe0"/></linearGradient></defs>
        <rect x="0" y="5" width="32" height="60" rx="4" fill="url(#g618)"/>
        <rect x="28" y="0" width="12" height="73" rx="2" fill="#2f3a42"/><path d="M33 12v56" stroke="#56707c" stroke-width="3" stroke-dasharray="1 2"/>
        <text text-anchor="middle" font-family="Liberation Serif" font-size="21" fill="#fff"><tspan x="14" y="24">6</tspan><tspan x="14" y="42">1</tspan><tspan x="14" y="60">8</tspan></text>
      </svg>
    </div>`;
  }

  nav() {
    return html`<div class="nav"><div class="nt">导航树</div>
      <div class="nb"><svg class="spark" width="18" height="16" viewBox="0 0 18 16"><path d="M4 8v7M.5 11.500h7M12 2v7M8.500 5.500h7" stroke="${B}" stroke-width="2.500"/></svg>
        <div class="nbtn"><svg width="19" height="17" viewBox="0 0 19 17"><path d="M6 2h13M6 8h13M6 14h13" stroke="${B}"/><rect x="0.500" y="0.500" width="3" height="3" fill="#d5e5f8" stroke="${B}"/><rect x="0.500" y="6.500" width="3" height="3" fill="#d5e5f8" stroke="${B}"/><rect x="0.500" y="12.500" width="3" height="3" fill="#d5e5f8" stroke="${B}"/></svg></div>
        <div class="nbtn"><svg width="20" height="18" viewBox="0 0 20 18"><rect x=".5" y=".5" width="19" height="17" fill="#fff" stroke="${B}"/><rect x="1" y="1" width="18" height="5" fill="${B}"/><path d="M3 9h9M3 12h5" stroke="${B}"/></svg></div>
      </div>
      <div class="tree">${NAV.map(([t, i, root]) => root
        ? html`<div class="tr root">${icon(i, 22)}<span>${t}</span></div>`
        : html`<div class="tr"><div class="child ${t === "门(M)" ? "on" : ""}">${icon(i, 23)}<span>${t}</span></div></div>`)}</div>
      <div class="thumb"></div></div>`;
  }

  midA() {
    return html`<div class="midA">
      <div class="panel" style="height:185px"><div class="strip">×</div><div class="ptitle">构件列表</div>
        <div class="ptool"><span class="pi">${icon("nw")}新建<i class="caret"></i></span><span class="pi">${icon("cp")}复制</span><span class="pi">${icon("dl")}删除</span></div>
        <div class="search">搜索构件...</div>
        <div class="list"><div class="li">内门-1</div><div class="li">内门-2</div><div class="li on">M0821</div></div></div>
      <div class="panel" style="flex:1;min-height:0"><div class="strip"></div>
        <div class="tabs"><div class="on">属性列表</div><div>图层管理</div></div>
        <div class="grid"><div class="h"></div><div class="h">属性名称</div><div class="h">属性值</div>
          ${PROPS.map(([n, a, v, k]) => html`<div class="n">${n}</div>
            <div class="${k.startsWith("b") ? "blue" : ""}">${k === "x" ? html`<i class="plus">+</i>` : ""}${a}</div>
            <div class="${k === "bg" ? "gray" : k === "x" ? "sec" : ""}">${v}</div>`)}</div>
        <div class="grest"></div></div></div>`;
  }

  midB() {
    return html`<div class="midB"><div class="panel" style="height:100%"><div class="strip">×</div><div class="ptitle">图纸管理</div>
      <div class="ptool wide"><span class="pi">${icon("add")}添加图纸<i class="caret"></i></span><span class="pi">${icon("spl")}分割<i class="caret"></i></span><span class="pi">${icon("loc")}定位</span><span class="pi">${icon("dl")}删除</span></div>
      <div class="pb"><div class="sp"></div>
        ${DRAW.map(([t, i, e, k]) => k === 0
          ? html`<div class="dr grp"><i class="plus">−</i>${t}</div>`
          : html`<div class="dr"><div class="nm">${t}</div><div class="ico">${icon(i, 22)}</div><div class="ex">${e}</div></div>`)}
        <div class="arrow" style="left:344px;top:691px"></div>
      </div></div></div>`;
  }

  canvas() {
    const ox = 1614, oct = (cx: number, cy: number, r: number) => {
      const p: string[] = [];
      for (let k = 0; k < 8; k++) p.push(`${(cx + r * Math.cos(Math.PI / 8 + (k * Math.PI) / 4)).toFixed(1)},${(cy + r * Math.sin(Math.PI / 8 + (k * Math.PI) / 4)).toFixed(1)}`);
      return p.join(" ");
    };
    return html`<div class="canvas">
      <svg width="941" height="780" viewBox="979 160 941 780">
        <path d="M1595 164h36v196h-70v-34h34zM1178 326h77v34h-33v580h-44zM1595 633h322v35H1595z" fill="#ffff33"/>
        <path d="M1178 360H1875" stroke="#c40000" stroke-width="1.500"/><path d="M1185 193v167" stroke="#d00000"/>
        <polygon points=${oct(1185, 178, 15)} fill="none" stroke="#0a8a0a"/>
        <text transform="translate(1185 188) scale(.8 1.15)" text-anchor="middle" font-family="Roboto" font-weight="300" font-size="24" fill="#eee">17</text>
        <polygon points=${oct(1185, 921, 15)} fill="none" stroke="#7a9a00"/>
        <g fill="none" stroke="#7f9df0">
          <rect x="1254.500" y="343.500" width="15" height="300"/>
          <path d="M1261 643.500A300 300 0 0 0 1561 343"/>
          <path d="M${ox} 360A266 260 0 0 1 1880 620"/>
          <path d="M1630.500 360v273M1613.500 620.500h266v13h-266z" stroke="#5f77d8"/>
          <rect x="1613.500" y="640.500" width="273" height="22" stroke="#8aa6f2"/>
          <path d="M1616.500 640v23M1620.500 640v23M1637.500 640v23M1862.500 640v23M1880.500 640v23M1883.500 640v23M1613 637.500h273"/>
        </g>
        <text transform="translate(1268 293) scale(.715 1.36)" font-family="Roboto" font-weight="100" font-size="100" fill="#c8c8c8">M0921</text>
        <text transform="translate(1572 636) rotate(-90) scale(.715 1.36)" font-family="Roboto" font-weight="100" font-size="100" fill="#008a8a">M0821</text>
        <path d="M1044 872V832" stroke="#00d000" stroke-width="4"/><path d="M1044 822l-6 12h12z" fill="#00d000"/>
        <path d="M1048 875h26" stroke="#e00000" stroke-width="4"/><path d="M1084 875l-12-6v12z" fill="#e00000"/>
        <rect x="1039" y="870" width="10" height="10" fill="#0000e0"/>
        <text x="1039" y="834" font-family="Liberation Sans" font-size="15" fill="#00d000">Y</text>
        <text x="1086" y="880" font-family="Liberation Sans" font-size="16" fill="#e00000">X</text>
        <rect x="1875" y="164" width="41" height="283" fill="#8d9298"/>
        <g transform="translate(1880 184)"><circle cx="15" cy="10" r="12" fill="#aab2bd" stroke="#667"/><circle cx="20" cy="4" r="6" fill="#eef1f5" stroke="#778"/><ellipse cx="13" cy="15" rx="15" ry="4" fill="none" stroke="#556" transform="rotate(-25 13 15)"/></g>
        <g stroke="#4f5968" fill="#7b8799">
          <path d="M1880 220l6-6h23v22l-6 6h-23z"/><path d="M1880 220h23v22M1903 220l6-6" fill="none"/>
          <path d="M1880 256l6-6h23v22l-6 6h-23z" fill="#cfe2f9"/><path d="M1880 256h23v22M1903 256l6-6M1880 256l6-6" fill="none"/><path d="M1885 255h18v18h-18z" fill="#e4effc"/>
          <path d="M1880 304l6-6h23v22l-6 6h-23z"/><path d="M1880 304h23v22M1903 304l6-6" fill="none"/>
        </g>
        <text x="1887" y="241" font-family="Liberation Sans" font-size="10" fill="#dde">3D</text>
        <path d="M1898 354a14 14 0 10 4 12" fill="none" stroke="#4f5968" stroke-width="2.500"/><path d="M1907 352v10h-10z" fill="#4f5968"/>
        <path d="M1891 286h8l-4 5zM1891 335h8l-4 5zM1891 384h8l-4 5z" fill="#3d444d"/>
        <path d="M1881 397h28" stroke="#6f747a"/>
        <rect x="1880.500" y="403.500" width="29" height="28" rx="1" fill="#7b8799" stroke="#4f5968"/><path d="M1881 409h28M1895 409v22M1884 414h3M1884 419h3M1884 424h3M1899 414h3M1899 419h3M1899 424h3" stroke="#e4e8ee"/>
        <path d="M1912 546v30" stroke="#3d4b5a" stroke-width="5" stroke-linecap="round"/><path d="M1912 576v28" stroke="#33b3e8" stroke-width="4"/><circle cx="1912" cy="605" r="5" fill="#33b3e8"/>
      </svg>
      <div class="tk"><div class="tkh">×</div><div class="tkb">提取门窗线</div></div>
    </div>`;
  }

  dialog() {
    return html`<div class="dlg"><div class="dh"><span>校核门窗</span><span class="dx">×</span></div>
      <div class="opts">
        <i class="cb"><svg width="12" height="10" viewBox="0 0 12 10"><path d="M1.500 5l3 3 6-7" fill="none" stroke="#fff" stroke-width="2"/></svg></i><span>缺少匹配构件</span>
        <i class="cb"><svg width="12" height="10" viewBox="0 0 12 10"><path d="M1.500 5l3 3 6-7" fill="none" stroke="#fff" stroke-width="2"/></svg></i><span>未使用的标注</span></div>
      <div class="dtabs"><div class="on">门</div><div>窗</div><div>门联窗</div></div>
      <div class="dbody"><div class="dt"><div class="dg">
        <div class="n hn"></div><div class="hd">名称</div><div class="hd">问题描述</div>
        ${CHECK.map(([a, b], i) => html`<div class="n ${i === 0 ? "s1" : ""}">${i + 1}</div><div class="${i === 0 ? "s2" : ""}">${a}</div><div class="${i === 0 ? "s3" : ""}">${b}</div>`)}
      </div><div class="dhdr"></div><div class="up"></div><div class="thumb"></div><div class="arrow" style="left:634px;bottom:8px"></div></div></div>
    </div>`;
  }

  status() {
    return html`<div class="status">
      ${STATUS.map(([w, t], i) => html`<div class="st ${i === 0 ? "wide" : ""}" style="width:${w}px">${t}</div>`)}
      <div class="sb a" style="width:29px"><svg width="14" height="18" viewBox="0 0 14 18"><path d="M3 2v13h9" fill="none" stroke="${B}" stroke-width="1.500"/></svg></div>
      <div class="sb a" style="width:45px;margin-left:5px"><svg width="18" height="18" viewBox="0 0 18 18"><rect x="3" y="2" width="12" height="15" fill="none" stroke="${B}"/><rect x="1" y="1" width="5" height="7" fill="${O}"/></svg><i class="caret"></i></div>
      <div class="sb g" style="width:32px;margin-left:7px"><svg width="18" height="18" viewBox="0 0 18 18"><path d="M3 2l12 14M15 2L3 16" stroke="#888"/></svg></div>
      <div class="sb a" style="width:44px;margin-left:4px"><svg width="18" height="18" viewBox="0 0 18 18"><path d="M3 16L15 2" stroke="${B}"/><circle cx="9" cy="9" r="2" fill="${O}"/></svg><i class="caret"></i></div>
      <div class="sb g" style="width:45px;margin-left:4px"><svg width="18" height="18" viewBox="0 0 18 18"><path d="M6 1v9M2 5h9" stroke="#444"/><path d="M8 14h8" stroke="#333" stroke-width="3"/></svg><i class="caret"></i></div>
      <div class="sb g t" style="width:87px;margin-left:5px">跨图层选择</div>
      <div class="sb g t" style="width:76px;margin-left:6px">折线选择</div>
      <div class="st" style="margin-left:7px">按鼠标左键指定第一个角点，或拾取构件图元</div>
      <div class="st fps">333.333 FPS</div>
    </div>`;
  }

  render() {
    return html`${this.ribbon()}
      <div class="bar">${["首层", "门窗洞", "门", "M0821"].map((s) => html`<div class="sel">${s}<i class="caret"></i></div>`)}
        <div class="sel" style="width:123px">分层1<i class="caret"></i></div></div>
      <div class="main">${this.nav()}${this.midA()}${this.midB()}${this.canvas()}</div>
      ${this.status()}${this.dialog()}`;
  }
}
